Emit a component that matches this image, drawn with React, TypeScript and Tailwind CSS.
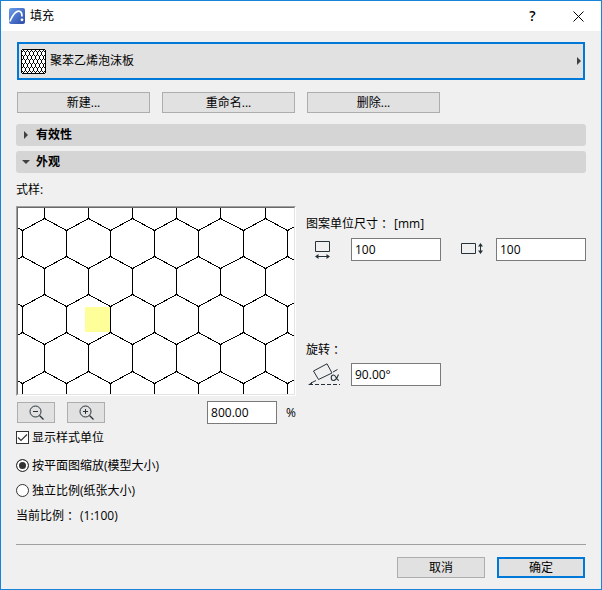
import React from "react";

const FONT = "font-['Open_Sans','Noto_Sans_CJK_SC',sans-serif]";

// Columns of the honeycomb's vertical edges; the outermost ones lie outside the view.
const upperColumns = [-18, 26, 70, 114, 158, 202, 247, 291];
const lowerColumns = [4, 48, 92, 136, 180, 225, 269, 313];
const rows = [
  { top: -16, peak: 10, valley: 22, bottom: 48, next: 60 },
  { top: 60, peak: 86, valley: 98, bottom: 124, next: 136 },
  { top: 136, peak: 163, valley: 175, bottom: 201, next: 213 },
];

const zigzag = (upperY: number, lowerY: number) =>
  upperColumns
    .map((x, i) => `${i ? "L" : "M"}${x + 0.5} ${upperY + 0.5}L${lowerColumns[i] + 0.5} ${lowerY + 0.5}`)
    .join("");

const honeycomb = rows
  .map((row) =>
    [
      ...upperColumns.map((x) => `M${x + 0.5} ${row.top}V${row.peak + 1}`),
      ...lowerColumns.map((x) => `M${x + 0.5} ${row.valley}V${row.bottom + 1}`),
      zigzag(row.peak, row.valley),
      zigzag(row.next, row.bottom),
    ].join("")
  )
  .join("");

const AppIcon = () => (
  <svg width="16" height="16" viewBox="0 0 16 16" aria-hidden="true">
    <defs>
      <linearGradient id="app" x1="0" y1="0" x2="1" y2="1">
        <stop offset="0" stopColor="#6a9fea" />
        <stop offset="1" stopColor="#2a49a8" />
      </linearGradient>
    </defs>
    <rect width="16" height="16" rx="2" fill="url(#app)" />
    <path d="M0.800 13.500C3 8.500 5.500 3.500 9.500 3.200C12 3.100 13 5 13 8.500" fill="none" stroke="#fff" strokeWidth="1.700" />
    <circle cx="13" cy="11.800" r="1.400" fill="#fff" />
  </svg>
);

const FillIcon = () => (
  <svg width="25" height="25" viewBox="0 0 25 25" shapeRendering="crispEdges" aria-hidden="true">
    <defs>
      <pattern id="cells" width="4" height="8" patternUnits="userSpaceOnUse">
        <path d="M0 3h1v3h-1zM1 2h1v1h-1zM3 2h1v1h-1zM2 0h1v2h-1zM1 6h1v1h-1zM3 6h1v1h-1zM2 7h1v1h-1z" />
      </pattern>
    </defs>
    <path d="M1 0H24V1H25V24H24V25H1V24H0V1H1Z" fill="#000" />
    <path d="M1 1H24V24H1Z" fill="#fff" />
    <path d="M1 1H24V24H1Z" fill="url(#cells)" />
  </svg>
);

const WidthIcon = () => (
  <svg width="16" height="20" viewBox="0 0 16 20" fill="none" stroke="#263238" aria-hidden="true">
    <path d="M0.500 0.500H14.500V10.500H0.500Z" />
    <path d="M1 15.500H14" />
    <path d="M0 15.500L3.500 13V18ZM15 15.500L11.500 13V18Z" fill="#263238" stroke="none" />
  </svg>
);

const HeightIcon = () => (
  <svg width="23" height="12" viewBox="0 0 23 12" fill="none" stroke="#263238" aria-hidden="true">
    <path d="M0.500 0.500H14.500V10.500H0.500Z" />
    <path d="M19.500 1V10" />
    <path d="M19.500 0L17 3.500H22ZM19.500 11L17 7.500H22Z" fill="#263238" stroke="none" />
  </svg>
);

const AngleIcon = () => (
  <svg width="33" height="23" viewBox="0 0 33 23" fill="none" stroke="#263238" aria-hidden="true">
    <path d="M5.500 8L19 0.800L24 10L10.500 16.500Z" />
    <path d="M3 20L8 17.500M25 9L29.500 6.500" />
    <path d="M0 22L4 19V22Z" fill="#263238" stroke="none" />
    <path d="M0 21.500H32" strokeDasharray="4 2" strokeDashoffset="-1" />
    <path d="M30.500 11.500C29.500 14 28 17.500 25.500 17.500C22.500 17.500 22.500 12 25.500 12C28 12 28.500 17.500 31 17.500" strokeWidth="1.100" />
  </svg>
);

const Magnifier = ({ plus = false }: { plus?: boolean }) => (
  <svg width="15" height="15" viewBox="0 0 15 15" fill="none" stroke="#263238" aria-hidden="true">
    <circle cx="6.500" cy="6.500" r="5.500" />
    <path d="M10.500 10.500L14.500 14.500" strokeWidth="1.300" />
    <path d={plus ? "M4 6.500H9M6.500 4V9" : "M4 6.500H9"} />
  </svg>
);

// The TC face centres the full-width colon in its cell.
const Caption = ({ text, unit, className = "" }: { text: string; unit?: string; className?: string }) => (
  <p className={`flex h-4 items-center ${className}`}>
    {text}
    <span className="font-['Noto_Sans_CJK_TC',sans-serif]">：</span>
    {unit && <span className="ml-1">{unit}</span>}
  </p>
);

const PushButton = ({ children, label, className = "" }: { children: React.ReactNode; label?: string; className?: string }) => (
  <button
    type="button"
    aria-label={label}
    className={`flex h-[21px] items-center justify-center border border-[#adadad] bg-[#e1e1e1] ${className}`}
  >
    {children}
  </button>
);

const NumberBox = ({ label, value, className = "" }: { label: string; value: string; className?: string }) => (
  <input
    aria-label={label}
    defaultValue={value}
    className={`h-[23px] border border-[#7a7a7a] bg-white px-[3px] outline-none ${className}`}
  />
);

const SectionHeader = ({ title, open = false }: { title: string; open?: boolean }) => (
  <button
    type="button"
    aria-expanded={open}
    className="flex h-[22px] w-full items-center gap-1.5 rounded-[3px] bg-[#d5d5d5] px-1.5 font-bold"
  >
    <svg width="8" height="8" viewBox="0 0 8 8" fill="#404040" aria-hidden="true">
      <path d={open ? "M0 2H8L4 6Z" : "M2 0V8L6 4Z"} />
    </svg>
    {title}
  </button>
);

const Radio = ({ label, checked = false }: { label: string; checked?: boolean }) => (
  <label className="flex h-[25px] items-center gap-[3px]">
    <input
      type="radio"
      name="scale"
      defaultChecked={checked}
      className="size-[13px] appearance-none rounded-full border border-[#333] bg-white checked:bg-[#333] checked:shadow-[inset_0_0_0_2px_#fff]"
    />
    {label}
  </label>
);

export default function App() {
  return (
    <div className={`flex min-h-screen flex-col border border-[#1883d7] bg-[#f0f0f0] text-[12px] leading-4 text-black ${FONT}`}>
      <header className="flex h-[30px] items-center bg-white pl-2">
        <AppIcon />
        <h1 className="ml-[5px] flex-1">填充</h1>
        <button type="button" aria-label="帮助" className="flex w-[45px] justify-center text-[14px] font-semibold">
          ?
        </button>
        <button type="button" aria-label="关闭" className="flex w-[46px] justify-center">
          <svg width="11" height="11" viewBox="0 0 11 11" stroke="#000" aria-hidden="true">
            <path d="M0.500 0.500L10.500 10.500M10.500 0.500L0.500 10.500" />
          </svg>
        </button>
      </header>

      <main className="flex flex-1 flex-col px-[15px] pt-[11px] pb-[11px]">
        <div className="mx-px">
          <button
            type="button"
            className="flex h-[38px] w-full items-center gap-1 border-2 border-[#0078d7] bg-[#e1e1e1] px-0.5"
          >
            <FillIcon />
            <span className="flex-1 text-left">聚苯乙烯泡沫板</span>
            <svg width="4" height="8" viewBox="0 0 4 8" fill="#404040" aria-hidden="true">
              <path d="M0 0V8L4 4Z" />
            </svg>
          </button>
          <div className="mt-3 flex gap-3">
            <PushButton className="w-[133px]">新建...</PushButton>
            <PushButton className="w-[133px]">重命名...</PushButton>
            <PushButton className="w-[133px]">删除...</PushButton>
          </div>
        </div>

        <div className="mt-[11px] flex flex-col gap-[5px]">
          <SectionHeader title="有效性" />
          <SectionHeader title="外观" open />
        </div>

        <div className="mt-[9px] flex gap-[10px]">
          <section className="w-[280px] shrink-0">
            <h2>式样:</h2>
            <div className="mt-2 border border-t-[#a0a0a0] border-r-white border-b-white border-l-[#a0a0a0]">
              <div className="border border-t-[#696969] border-r-[#e3e3e3] border-b-[#e3e3e3] border-l-[#696969] bg-white">
                <svg viewBox="0 0 276 186" className="block w-full" shapeRendering="crispEdges" role="img">
                  <rect x="67" y="99" width="25" height="25" fill="#ffff99" />
                  <path d={honeycomb} fill="none" stroke="#000" />
                </svg>
              </div>
            </div>
            <div className="mt-[5px] flex items-center pl-px">
              <PushButton label="缩小" className="w-[38px]">
                <Magnifier />
              </PushButton>
              <PushButton label="放大" className="ml-3 w-[38px]">
                <Magnifier plus />
              </PushButton>
              <NumberBox label="缩放" value="800.00" className="ml-auto w-[70px]" />
              <span className="ml-[9px]">%</span>
            </div>
          </section>

          <section className="flex-1">
            <Caption text="图案单位尺寸" unit="[mm]" className="mt-[34px]" />
            <div className="mt-[5px] flex items-center">
              <span className="flex w-[45px] justify-center pr-3 pt-1">
                <WidthIcon />
              </span>
              <NumberBox label="宽度" value="100" className="w-[90px]" />
              <span className="flex flex-1 justify-end pr-3">
                <HeightIcon />
              </span>
              <NumberBox label="高度" value="100" className="w-[90px]" />
            </div>
            <Caption text="旋转" className="mt-[81px]" />
            <div className="mt-[5px] flex items-center">
              <span className="w-[45px] pl-0.5">
                <AngleIcon />
              </span>
              <NumberBox label="旋转" value="90.00°" className="w-[90px]" />
            </div>
          </section>
        </div>

        <label className="mt-1 flex h-[19px] items-center gap-[3px]">
          <span className="relative flex size-[13px]">
            <input type="checkbox" defaultChecked className="peer size-[13px] appearance-none border border-[#333] bg-white" />
            <svg
              className="pointer-events-none absolute inset-0 hidden peer-checked:block"
              width="13"
              height="13"
              viewBox="0 0 13 13"
              fill="none"
              stroke="#333"
              aria-hidden="true"
            >
              <path d="M2 6.500L5 9.500L11 3.500" strokeWidth="1.200" />
            </svg>
          </span>
          显示样式单位
        </label>
        <div className="mt-1.5">
          <Radio label="按平面图缩放(模型大小)" checked />
          <Radio label="独立比例(纸张大小)" />
          <Caption text="当前比例" unit="(1:100)" className="mt-[5px]" />
        </div>

        <footer className="mt-auto flex justify-end gap-3 border-t border-[#a0a0a0] pt-3 pr-px">
          <PushButton className="w-[88px]">取消</PushButton>
          <button
            type="submit"
            className="flex h-[21px] w-[88px] items-center justify-center border-2 border-[#0078d7] bg-[#e1e1e1]"
          >
            确定
          </button>
        </footer>
      </main>
    </div>
  );
}
